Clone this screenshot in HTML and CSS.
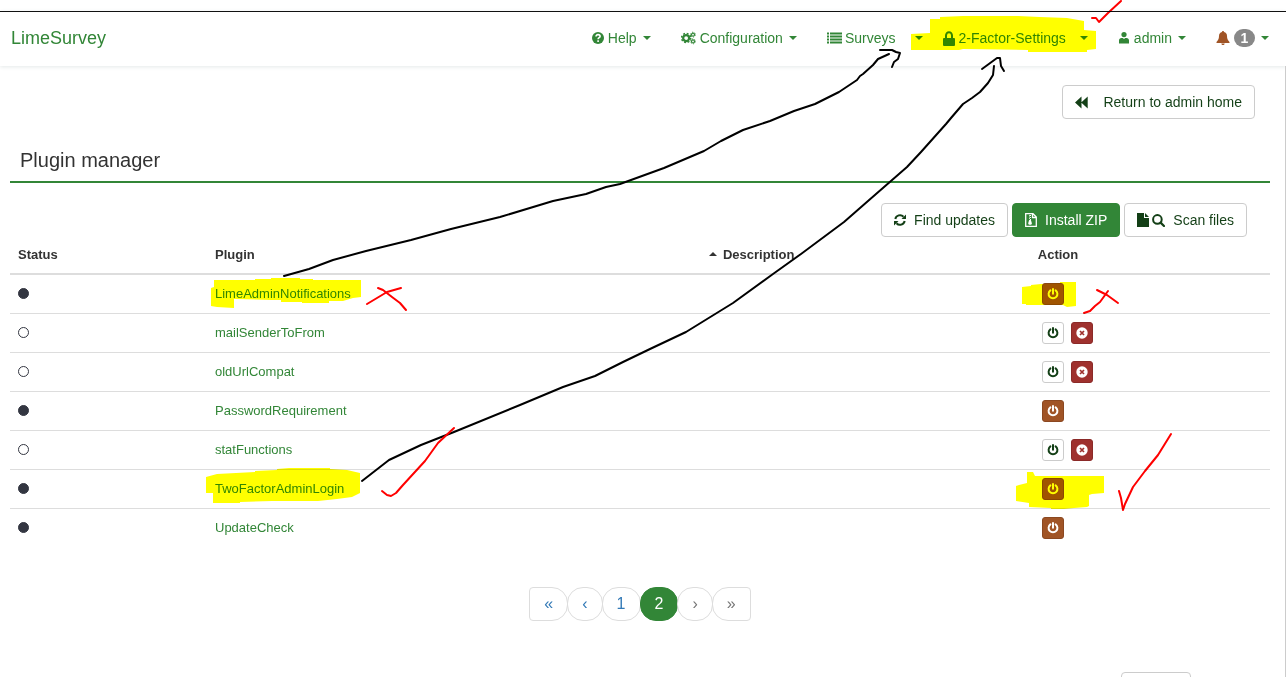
FILE: index.html
```
<!DOCTYPE html>
<html lang="en">
<head>
  <meta charset="UTF-8" />
  <meta name="viewport" content="width=device-width, initial-scale=1.0" />
  <title>LimeSurvey - Plugin manager</title>
  <link rel="stylesheet" href="styles.css">
</head>
<body>
  <!-- Icon sprite -->
  <svg class="sprite" aria-hidden="true">
    <symbol id="i-help" viewBox="0 0 12 12"><circle cx="6" cy="6" r="6" fill="currentColor"/><path d="M4 4.6C4 3.2 5 2.6 6 2.6s2.1.6 2.1 1.8C8.100 5.700 6.100 5.700 6.100 7.200M6.100 8.200v1.700" fill="none" stroke="#fff" stroke-width="1.600"/></symbol>
    <symbol id="i-cogs" viewBox="0 0 16 14">
      <circle cx="5.500" cy="7" r="3.200" fill="none" stroke="currentColor" stroke-width="2.400"/>
      <circle cx="5.500" cy="7" r="4.900" fill="none" stroke="currentColor" stroke-width="1.600" stroke-dasharray="2 1.850"/>
      <circle cx="12.800" cy="3.400" r="1.600" fill="none" stroke="currentColor" stroke-width="1.300"/>
      <circle cx="12.800" cy="3.400" r="2.600" fill="none" stroke="currentColor" stroke-width="1" stroke-dasharray="1.200 1.520"/>
      <circle cx="12.800" cy="10.600" r="1.600" fill="none" stroke="currentColor" stroke-width="1.300"/>
      <circle cx="12.800" cy="10.600" r="2.600" fill="none" stroke="currentColor" stroke-width="1" stroke-dasharray="1.200 1.520"/>
    </symbol>
    <symbol id="i-list" viewBox="0 0 15 12"><path d="M0 1.500h2M3 1.500h12M0 4.500h2M3 4.500h12M0 7.500h2M3 7.500h12M0 10.500h2M3 10.500h12" stroke="currentColor" stroke-width="2"/></symbol>
    <symbol id="i-lock" viewBox="0 0 12 15"><path d="M3 8V4.500a3 3.300 0 0 1 6 0V8" fill="none" stroke="currentColor" stroke-width="2"/><rect y="7" width="12" height="8" rx="1" fill="currentColor"/></symbol>
    <symbol id="i-user" viewBox="0 0 10 12"><circle cx="5" cy="2.600" r="2.600" fill="currentColor"/><path d="M0 11.500V8.500C0 7 1 6 2.500 6h1.200L5 7l1.300-1h1.200C9 6 10 7 10 8.500v3z" fill="currentColor"/></symbol>
    <symbol id="i-bell" viewBox="0 0 14 14"><path d="M7 0c.6 0 1 .4 1 1 2 .5 3 2 3 4 0 3 1 4.500 2.500 6v1H.5v-1C2 9.500 3 8 3 5c0-2 1-3.500 3-4 0-.6.4-1 1-1zM5.300 12.500h3.400C8.500 13.500 7.800 14 7 14s-1.500-.5-1.700-1.500z" fill="currentColor"/></symbol>
    <symbol id="i-back" viewBox="0 0 13 12"><path d="M6.500 0v12L0 6zM12.700 0v12L6.200 6z" fill="currentColor"/></symbol>
    <symbol id="i-sync" viewBox="0 0 12 12"><path d="M1.300 5A4.800 4.800 0 0 1 9.500 2.700M10.700 7A4.800 4.800 0 0 1 2.500 9.300" fill="none" stroke="currentColor" stroke-width="2"/><path d="M12 .5V5H7.500zM0 11.500V7h4.500z" fill="currentColor"/></symbol>
    <symbol id="i-zip" viewBox="0 0 12 14"><path d="M.7.7H8L11.300 4v9.300H.7zM7.500.7V4.500h3.800" fill="none" stroke="currentColor" stroke-width="1.300"/><path d="M4 1v1h1v1H4v1h1v1H4v1h1v1M5 2h1v1H5zM5 4h1v1H5zM5 6h1v1H5z" fill="currentColor"/><path d="M4.200 7h1.700l1 3.200c0 1-.8 1.600-1.800 1.600s-1.900-.6-1.900-1.600z" fill="currentColor"/></symbol>
    <symbol id="i-file" viewBox="0 0 12 14"><path d="M0 0h7v5h5v9H0zM8 0l4 4H8z" fill="currentColor"/></symbol>
    <symbol id="i-search" viewBox="0 0 13 13"><circle cx="5.400" cy="5.400" r="4.300" fill="none" stroke="currentColor" stroke-width="2"/><path d="M8.600 8.600L12 12" stroke="currentColor" stroke-width="2.200" stroke-linecap="round"/></symbol>
    <symbol id="i-power" viewBox="0 0 12 12"><path d="M3.400 2.400a4.400 4.400 0 1 0 5.200 0M6 1v4.800" fill="none" stroke="currentColor" stroke-width="2" stroke-linecap="round"/></symbol>
    <symbol id="i-remove" viewBox="0 0 12 12"><circle cx="6" cy="6" r="5.700" fill="currentColor"/><path d="M4 4l4 4M8 4L4 8" stroke="#9f312e" stroke-width="1.700"/></symbol>
  </svg>

  <div class="app">
    <header class="navbar">
      <a class="brand" href="#">LimeSurvey</a>
      <nav class="nav">
        <a class="nav-item" href="#"><svg class="icon-12"><use href="#i-help"/></svg>Help<i class="caret"></i></a>
        <a class="nav-item" href="#"><svg class="icon-15"><use href="#i-cogs"/></svg>Configuration<i class="caret"></i></a>
        <div class="nav-split">
          <a class="nav-item tight" href="#"><svg class="icon-15"><use href="#i-list"/></svg>Surveys</a>
          <button class="caret-btn" type="button" aria-label="Surveys menu"><i class="caret"></i></button>
        </div>
        <div class="nav-split">
          <a class="nav-item tight" href="#"><svg class="icon-lock"><use href="#i-lock"/></svg>2-Factor-Settings</a>
          <button class="caret-btn narrow" type="button" aria-label="2-Factor-Settings menu"><i class="caret"></i></button>
        </div>
        <a class="nav-item" href="#"><svg class="icon-12"><use href="#i-user"/></svg>admin<i class="caret"></i></a>
        <a class="nav-item" href="#"><svg class="icon-bell"><use href="#i-bell"/></svg><span class="badge">1</span><i class="caret"></i></a>
      </nav>
    </header>

    <main class="content">
      <div class="top-actions">
        <button class="btn" type="button"><svg class="icon-13"><use href="#i-back"/></svg>Return to admin home</button>
      </div>

      <h1 class="page-title">Plugin manager</h1>

      <div class="toolbar">
        <button class="btn" type="button"><svg class="icon-12"><use href="#i-sync"/></svg>Find updates</button>
        <button class="btn btn-primary" type="button"><svg class="icon-14"><use href="#i-zip"/></svg>Install ZIP</button>
        <button class="btn" type="button"><span class="icon-pair"><svg class="icon-14"><use href="#i-file"/></svg><svg class="icon-13"><use href="#i-search"/></svg></span>Scan files</button>
      </div>

      <table class="plugins">
        <thead>
          <tr>
            <th class="col-status">Status</th>
            <th class="col-plugin">Plugin</th>
            <th class="col-desc"><i class="caret up"></i>Description</th>
            <th>Action</th>
          </tr>
        </thead>
        <tbody>
          <tr>
            <td><span class="dot on"></span></td>
            <td><a href="#">LimeAdminNotifications</a></td>
            <td></td>
            <td><div class="actions"><button class="btn-xs warn" type="button" aria-label="Deactivate"><svg><use href="#i-power"/></svg></button></div></td>
          </tr>
          <tr>
            <td><span class="dot"></span></td>
            <td><a href="#">mailSenderToFrom</a></td>
            <td></td>
            <td><div class="actions"><button class="btn-xs" type="button" aria-label="Activate"><svg><use href="#i-power"/></svg></button><button class="btn-xs danger" type="button" aria-label="Uninstall"><svg><use href="#i-remove"/></svg></button></div></td>
          </tr>
          <tr>
            <td><span class="dot"></span></td>
            <td><a href="#">oldUrlCompat</a></td>
            <td></td>
            <td><div class="actions"><button class="btn-xs" type="button" aria-label="Activate"><svg><use href="#i-power"/></svg></button><button class="btn-xs danger" type="button" aria-label="Uninstall"><svg><use href="#i-remove"/></svg></button></div></td>
          </tr>
          <tr>
            <td><span class="dot on"></span></td>
            <td><a href="#">PasswordRequirement</a></td>
            <td></td>
            <td><div class="actions"><button class="btn-xs warn" type="button" aria-label="Deactivate"><svg><use href="#i-power"/></svg></button></div></td>
          </tr>
          <tr>
            <td><span class="dot"></span></td>
            <td><a href="#">statFunctions</a></td>
            <td></td>
            <td><div class="actions"><button class="btn-xs" type="button" aria-label="Activate"><svg><use href="#i-power"/></svg></button><button class="btn-xs danger" type="button" aria-label="Uninstall"><svg><use href="#i-remove"/></svg></button></div></td>
          </tr>
          <tr>
            <td><span class="dot on"></span></td>
            <td><a href="#">TwoFactorAdminLogin</a></td>
            <td></td>
            <td><div class="actions"><button class="btn-xs warn" type="button" aria-label="Deactivate"><svg><use href="#i-power"/></svg></button></div></td>
          </tr>
          <tr>
            <td><span class="dot on"></span></td>
            <td><a href="#">UpdateCheck</a></td>
            <td></td>
            <td><div class="actions"><button class="btn-xs warn" type="button" aria-label="Deactivate"><svg><use href="#i-power"/></svg></button></div></td>
          </tr>
        </tbody>
      </table>

      <nav class="pagination" aria-label="Pages">
        <a href="#">«</a>
        <a href="#">‹</a>
        <a href="#">1</a>
        <a class="active" href="#">2</a>
        <a class="disabled" href="#">›</a>
        <a class="disabled" href="#">»</a>
      </nav>

      <div class="page-size">
        <button class="btn" type="button" aria-label="Rows per page"></button>
      </div>
    </main>

    <!-- Pen marks and highlighter over the page -->
    <svg class="marks" viewBox="0 0 1286 677" aria-hidden="true">
      <g class="highlight">
        <path d="M911 34L930 33V19H940V17L963 16H1018L1040 17L1067 18L1084 21V30L1096 31V49L1087 50V52H1028V50L963 49L959 50H911z"/>
        <path d="M214 280H255V279H271V278H300V279H313V280H361V297L353 298L343 301H329V303H302V302H281V300H271L234 299V308L217 307L211 306V288L214 287z"/>
        <path d="M206 477L217 474L255 472V471L277 470V469L289 468H330V469L347 470L360 473V493L352 497L337 499L318 501H272L240 502V503H213V493H206z"/>
        <path d="M1022 287L1031 286V285L1041 284L1060 283V282H1076V306L1067 307L1063 305H1026V304H1022z"/>
        <path d="M1016 486L1019 485L1027 483V472H1033L1035 476H1104V493L1092 494L1089 495V506L1087 507L1074 508L1064 509H1051V508L1029 507V503L1016 501z"/>
      </g>
      <g class="pen black">
        <path d="M284 276L309 269L333 260L366 251L411 240L451 229L500 217L553 201L586 194L606 187L620 184L664 168L704 151L721 141L743 130L770 121L794 111L815 104L839 92L857 80L860 76L863 74L873 65L878 59L889 54"/>
        <path d="M880 50L892 50L896 52L900 53L898 59L894 62L892 67"/>
        <path d="M362 481L389 460L421 445L454 432L520 405L563 387L595 376L623 362L650 349L686 332L733 303L773 274L801 254L844 222L868 201L907 167L921 152L946 124L951 118L963 104L972 98L980 92L988 83L993 75L994 66"/>
        <path d="M982 69L997 58L1000 58L1001 66L1004 71"/>
      </g>
      <g class="pen red">
        <path d="M1092 18L1096 18L1099 22L1108 13L1121 1"/>
        <path d="M367 304L387 292L401 288M378 288L383 290L392 297L400 303L406 310"/>
        <path d="M1084 313L1090 311L1095 306L1100 302L1108 291M1097 290L1107 295L1118 303"/>
        <path d="M382 491L387 495L391 496L396 493L403 485L425 461L438 443L454 428"/>
        <path d="M1119 491L1121 498L1123 510L1125 504L1133 487L1145 471L1158 455L1171 434"/>
      </g>
    </svg>
  </div>
</body>
</html>
```
FILE: styles.css
```
/* Global styles */
* {
  box-sizing: border-box;
}
body {
  margin: 0;
  background: #fff;
  color: #333;
  font-family: "Liberation Sans", Arial, sans-serif;
  font-size: 13px;
  line-height: 18px;
}
a {
  color: #328637;
  text-decoration: none;
}
svg {
  display: block;
  flex: none;
}
.sprite {
  position: absolute;
  width: 0;
  height: 0;
}
.app {
  position: relative;
  height: 100vh;
  padding-top: 11px;
  overflow: hidden;
}
/* Icon sizes */
.icon-12 {
  width: 12px;
  height: 12px;
}
.icon-13 {
  width: 13px;
  height: 13px;
}
.icon-14 {
  width: 12px;
  height: 14px;
}
.icon-15 {
  width: 15px;
  height: 14px;
}
.icon-lock {
  width: 12px;
  height: 15px;
}
.icon-bell {
  width: 14px;
  height: 14px;
  color: #a05426;
}
/* Navbar */
.navbar {
  display: flex;
  align-items: center;
  justify-content: space-between;
  height: 55px;
  padding: 0 17px 2px 11px;
  border-top: 1px solid #111;
  box-shadow: 0 1px 4px #e4e9e9;
}
.brand {
  font-size: 18px;
}
.nav {
  display: flex;
  gap: 30px;
  font-size: 14px;
}
.nav-item,
.nav-split {
  display: flex;
  align-items: center;
}
.nav-item {
  gap: 4px;
}
.nav-item.tight {
  gap: 3px;
}
.nav-split + .nav-split {
  margin-left: -10px;
}
.caret {
  width: 8px;
  margin-left: 2px;
  border: 4px solid transparent;
  border-top-color: currentColor;
  border-bottom: 0;
}
.caret.up {
  display: inline-block;
  margin: 0 6px 3px 0;
  border: 4px solid transparent;
  border-bottom-color: currentColor;
  border-top: 0;
}
.caret-btn {
  padding: 0 0 0 18px;
  border: 0;
  background: none;
  color: #328637;
  cursor: pointer;
}
.caret-btn.narrow {
  padding-left: 12px;
}
.caret-btn .caret {
  display: block;
}
.badge {
  min-width: 21px;
  border-radius: 10px;
  background: #888;
  color: #fff;
  font-weight: bold;
  text-align: center;
}
/* Buttons */
.btn {
  display: flex;
  align-items: center;
  gap: 8px;
  height: 34px;
  padding: 0 12px;
  border: 1px solid #ccc;
  border-radius: 4px;
  background: #fff;
  color: #133f16;
  font: inherit;
  font-size: 14px;
  cursor: pointer;
}
.btn-primary {
  border-color: #328637;
  background: #328637;
  color: #fff;
}
.icon-pair {
  display: flex;
  align-items: center;
  gap: 3px;
}
/* Page content */
.content {
  padding: 19px 15px 0 10px;
  border-right: 1px solid #ccc;
  height: 100%;
}
.top-actions {
  display: flex;
  justify-content: flex-end;
  padding-right: 15px;
}
.top-actions .btn {
  gap: 15px;
}
.page-title {
  margin: 27px 0 20px;
  padding: 0 10px 7px;
  border-bottom: 2px solid #328637;
  font-size: 20px;
  font-weight: normal;
  line-height: 28px;
}
.toolbar {
  display: flex;
  justify-content: flex-end;
  gap: 4px;
  padding-right: 23px;
}
/* Plugin table */
.plugins {
  width: 100%;
  border-collapse: separate;
  border-spacing: 0;
  table-layout: fixed;
}
.plugins th {
  height: 38px;
  padding: 0 8px;
  border-bottom: 2px solid #ddd;
  text-align: left;
}
.plugins td {
  height: 39px;
  padding: 0 8px;
  border-bottom: 1px solid #ddd;
}
.plugins tr:last-child td {
  height: 38px;
  border-bottom: 0;
}
.col-status {
  width: 197px;
}
.col-plugin {
  width: 39.2%;
}
.col-desc {
  width: 26.1%;
}
.dot {
  display: block;
  width: 11px;
  height: 11px;
  margin-bottom: 2px;
  border: 1px solid #333641;
  border-radius: 50%;
}
.dot.on {
  background: #333641;
}
.actions {
  display: flex;
  gap: 7px;
  padding-left: 4px;
}
.btn-xs {
  display: flex;
  align-items: center;
  justify-content: center;
  width: 22px;
  height: 22px;
  padding: 0;
  border: 1px solid #ccc;
  border-radius: 3px;
  background: #fff;
  color: #133f16;
  cursor: pointer;
}
.btn-xs svg {
  width: 12px;
  height: 12px;
}
.btn-xs.warn {
  border-color: #8b4821;
  background: #a05426;
  color: #fff;
}
.btn-xs.danger {
  border-color: #8b2a28;
  background: #9f312e;
  color: #fff;
}
/* Pagination */
.pagination {
  display: flex;
  justify-content: center;
  margin-top: 40px;
}
.pagination a {
  min-width: 35px;
  height: 34px;
  margin-left: -1px;
  padding: 0 14px;
  border: 1px solid #ddd;
  border-radius: 16px;
  color: #337ab7;
  font-size: 16px;
  line-height: 32px;
  text-align: center;
}
.pagination a:first-child {
  margin-left: 0;
  border-radius: 4px 16px 16px 4px;
}
.pagination a:last-child {
  border-radius: 16px 4px 4px 16px;
}
.pagination a.active {
  border-color: #328637;
  background: #328637;
  color: #fff;
}
.pagination a.disabled {
  color: #777;
}
.page-size {
  display: flex;
  justify-content: flex-end;
  margin-top: 51px;
  padding-right: 79px;
}
.page-size .btn {
  width: 70px;
}
/* Marks drawn over the page */
.marks {
  position: absolute;
  top: 0;
  left: 0;
  width: 100%;
  pointer-events: none;
  mix-blend-mode: multiply;
}
.highlight {
  fill: #ff0;
}
.pen {
  fill: none;
  stroke-width: 2;
  stroke-linecap: round;
  stroke-linejoin: round;
}
.pen.black {
  stroke: #000;
}
.pen.red {
  stroke: #f00;
}
```
